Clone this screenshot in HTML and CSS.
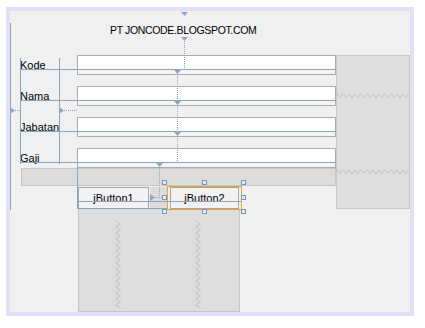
FILE: index.html
```html
<!DOCTYPE html>
<html>
<head>
<meta charset="utf-8">
<link rel="stylesheet" href="styles.css">
</head>
<body>
<div class="frame">
  <div class="canvas">
    <div class="title">PT JONCODE.BLOGSPOT.COM</div>
    <div class="label r2">Kode</div>
    <div class="field r2"></div>
    <div class="label r4">Nama</div>
    <div class="field r4"></div>
    <div class="label r6">Jabatan</div>
    <div class="field r6"></div>
    <div class="label r8">Gaji</div>
    <div class="field r8"></div>
    <div class="side">
      <svg class="fill-svg" width="72" height="152" viewBox="0 0 72 152">
        <defs>
          <pattern id="zh1" x="0" y="37" width="6" height="5" patternUnits="userSpaceOnUse">
            <path d="M0 0.5 L3 4.5 L6 0.5" stroke="#c2c2c2" fill="none"/>
          </pattern>
          <pattern id="zh2" x="0" y="113" width="6" height="5" patternUnits="userSpaceOnUse">
            <path d="M0 0.5 L3 4.5 L6 0.5" stroke="#c2c2c2" fill="none"/>
          </pattern>
        </defs>
        <rect x="0" y="37" width="72" height="5" fill="url(#zh1)"/>
        <rect x="0" y="113" width="72" height="5" fill="url(#zh2)"/>
      </svg>
    </div>
    <div class="bar"></div>
    <div class="btnrow">
      <div class="btn">jButton1</div>
      <div class="spacer"></div>
      <div class="selected"><div class="btn btn2">jButton2</div></div>
    </div>
    <div class="filler">
      <svg class="fill-svg" width="160" height="102" viewBox="0 0 160 102">
        <defs>
          <pattern id="zv1" x="36" y="0" width="6" height="6" patternUnits="userSpaceOnUse">
            <path d="M0.5 0 L5.5 3 L0.5 6" stroke="#c2c2c2" fill="none"/>
          </pattern>
          <pattern id="zv2" x="116" y="0" width="6" height="6" patternUnits="userSpaceOnUse">
            <path d="M0.5 0 L5.5 3 L0.5 6" stroke="#c2c2c2" fill="none"/>
          </pattern>
        </defs>
        <rect x="36" y="12" width="6" height="87" fill="url(#zv1)"/>
        <rect x="116" y="12" width="6" height="87" fill="url(#zv2)"/>
      </svg>
    </div>
    <svg class="guides" width="400" height="301" viewBox="0 0 400 301">
      <g stroke="#8aa5c2" stroke-width="1" fill="none" shape-rendering="crispEdges">
        <path d="M0.5 12V199 M10.5 47V153 M49.5 47V153 M10 58.5H326 M10 89.5H326 M10 120.5H326 M10 151.5H326 M67.5 157V198 M67 197.5H157 M67 190.5H231"/>
      </g>
      <rect x="157.5" y="175.5" width="74" height="23" fill="none" stroke="#f2a12c" stroke-width="1" shape-rendering="crispEdges"/>
      <g stroke="#8aa5c2" stroke-width="1" stroke-dasharray="1 1" fill="none" shape-rendering="crispEdges">
        <path d="M174.5 30V57 M167.5 63V88 M167.5 94V119 M167.5 125V151 M149.5 156V186 M5 99.5H10 M54 99.5H67 M145 186.5H152"/>
      </g>
      <g fill="#8ea8c4">
        <polygon points="171,1 178,1 174.5,5"/>
        <polygon points="171,26 178,26 174.5,30"/>
        <polygon points="164,59 171,59 167.5,63"/>
        <polygon points="164,90 171,90 167.5,94"/>
        <polygon points="164,121 171,121 167.5,125"/>
        <polygon points="146,152 153,152 149.5,156"/>
        <polygon points="0,96 0,103 5,99.5"/>
        <polygon points="49,96 49,103 54,99.5"/>
        <polygon points="140,183 140,190 145,186.5"/>
      </g>
      <g fill="#e8eef7" stroke="#7896bb" stroke-width="1" shape-rendering="crispEdges">
        <rect x="152.5" y="169.5" width="4" height="4"/>
        <rect x="192.5" y="169.5" width="4" height="4"/>
        <rect x="231.5" y="169.5" width="4" height="4"/>
        <rect x="152.5" y="184.5" width="4" height="4"/>
        <rect x="231.5" y="184.5" width="4" height="4"/>
        <rect x="152.5" y="198.5" width="4" height="4"/>
        <rect x="192.5" y="198.5" width="4" height="4"/>
        <rect x="231.5" y="198.5" width="4" height="4"/>
      </g>
    </svg>
  </div>
</div>
</body>
</html>
```
FILE: styles.css
```css
body {
  margin: 0;
  background: #ffffff;
  font-family: "Liberation Sans", Arial, sans-serif;
  color: #000000;
}

.frame {
  margin: 7px 0 0 6px;
  width: 400px;
  height: 301px;
  border: 4px solid #e0e0f8;
  background: #f0f0f0;
}

.canvas {
  position: relative;
  display: grid;
  grid-template-columns: 10px 57px 259px 74px;
  grid-template-rows: 44px 20px 11px 20px 11px 20px 11px 20px 18px 1px 22px 103px;
  width: 400px;
  height: 301px;
}

.title {
  grid-column: 1 / 5;
  grid-row: 1;
  padding: 13px 0 0 100px;
  font-size: 10.5px;
  line-height: 12px;
  letter-spacing: -0.35px;
  white-space: nowrap;
}

.label {
  grid-column: 2;
  padding-top: 3px;
  font-size: 11px;
  line-height: 14px;
}

.r2 { grid-row: 2; }
.r4 { grid-row: 4; }
.r6 { grid-row: 6; }
.r8 { grid-row: 8; }

.field {
  grid-column: 3;
  box-sizing: border-box;
  border: 1px solid #ababab;
  background: linear-gradient(#ffffff 0 13px, #f4f4f4 13px);
}

.side {
  grid-column: 4;
  grid-row: 2 / 12;
  box-sizing: border-box;
  border: 1px solid #c6c6c6;
  background: #dedede;
}

.fill-svg {
  display: block;
}

.bar {
  grid-column: 2 / 4;
  grid-row: 9;
  margin-left: 1px;
  box-sizing: border-box;
  border: 1px solid #c6c6c6;
  background: #dcdcdc;
}

.btnrow {
  grid-column: 3 / 5;
  grid-row: 11;
  display: flex;
  align-items: flex-start;
  padding-left: 1px;
}

.btn {
  box-sizing: border-box;
  flex: none;
  width: 71px;
  height: 22px;
  border: 1px solid #a6a6a6;
  background: #f2f2f2;
  font-size: 11px;
  line-height: 20px;
  text-align: center;
  white-space: nowrap;
}

.spacer {
  flex: none;
  width: 17px;
  height: 22px;
  margin-left: 1px;
  background: #dcdcdc;
}

.selected {
  flex: none;
  box-sizing: border-box;
  width: 75px;
  height: 22px;
  padding: 0 3px;
}

.btn2 {
  width: 69px;
}

.filler {
  grid-column: 3;
  grid-row: 12;
  margin-left: 1px;
  width: 162px;
  box-sizing: border-box;
  border: 1px solid #c4c4c4;
  border-top: none;
  background: #dedede;
}

.guides {
  position: absolute;
  left: 0;
  top: 0;
  pointer-events: none;
  overflow: visible;
}
```
